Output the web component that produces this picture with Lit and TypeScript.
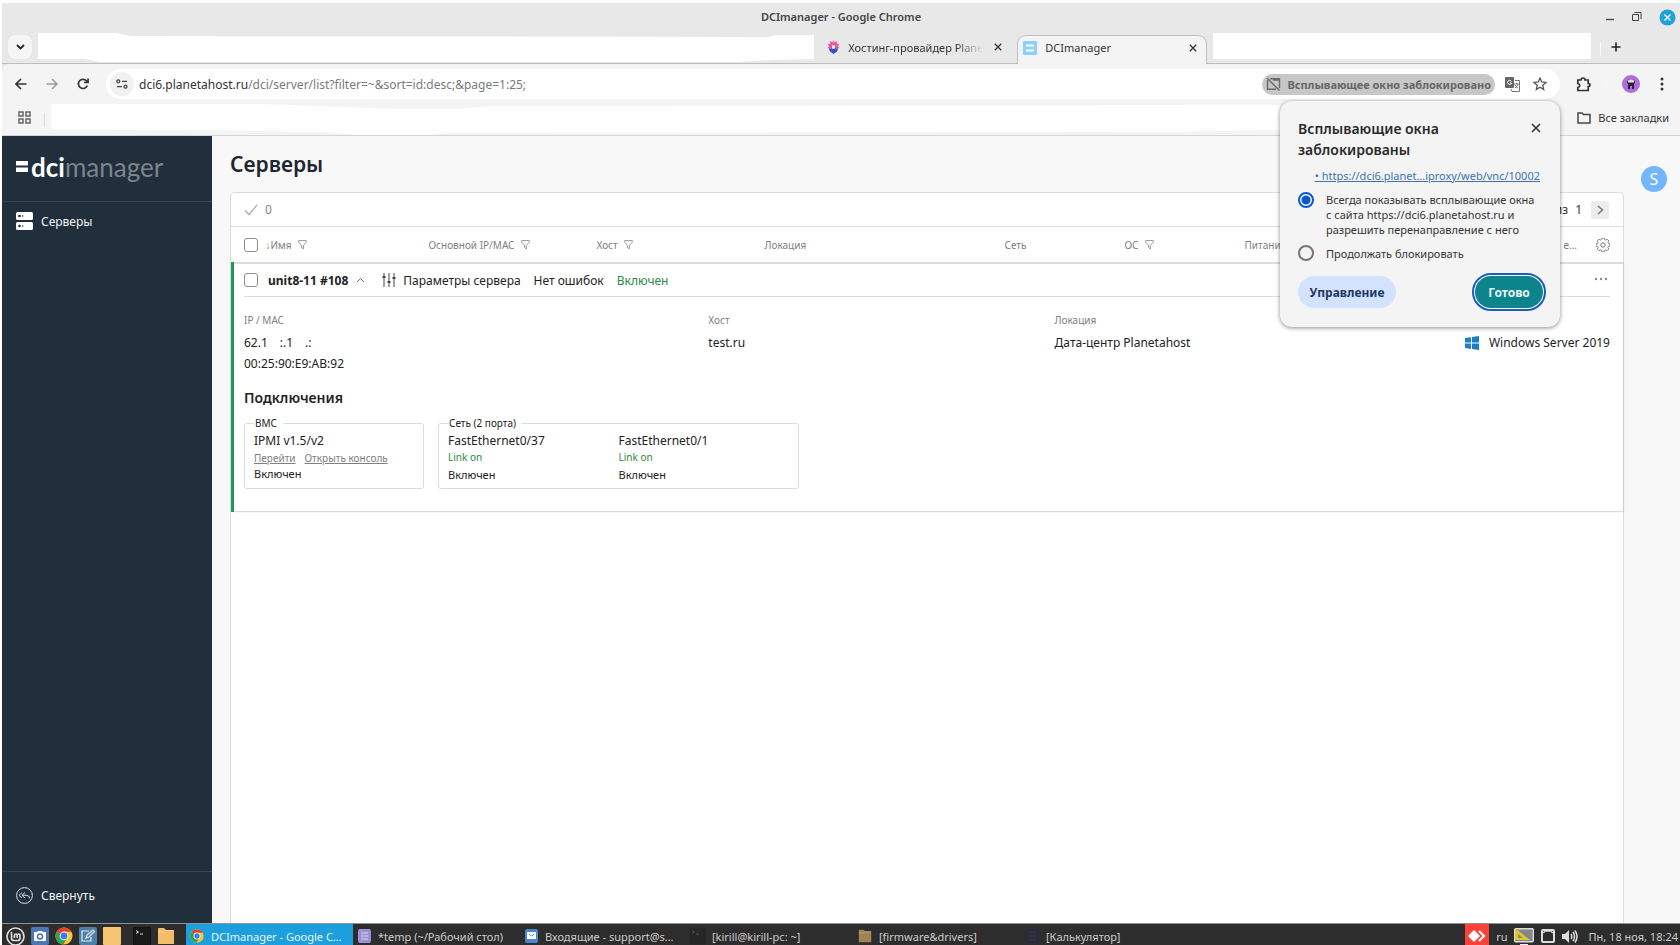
import { LitElement, html, css, svg } from "lit";
import { customElement, state } from "lit/decorators.js";

const funnel = html`<svg class="funnel" width="9" height="10" viewBox="0 0 9 10" fill="none" stroke="#999" aria-hidden="true"><path d="M.7.6h7.6v1.6L5.4 5.4v3.4l-1.8-1V5.4L.7 2.2z"/></svg>`;
const cross = (s: number) => html`<svg width=${s} height=${s} viewBox="0 0 10 10" fill="none" stroke="#333" stroke-width="1.6" aria-hidden="true"><path d="M1 1l8 8M9 1L1 9"/></svg>`;
const chromeBall = (s: number) => html`<svg width=${s} height=${s} viewBox="0 0 20 20" aria-hidden="true">
  <circle cx="10" cy="10" r="9.5" fill="#fbc52d"/><path d="M10 10L1.8 5.2A9.5 9.5 0 0 1 18.2 5.3H10z" fill="#e6402f"/>
  <path d="M10 10L1.8 5.2A9.5 9.5 0 0 0 9.2 19.5L14 12z" fill="#2ea352"/><circle cx="10" cy="10" r="4.9" fill="#fff"/><circle cx="10" cy="10" r="3.8" fill="#3b7ded"/></svg>`;
const terminal = (dim: boolean) => html`<svg width="18" height="18" viewBox="0 0 18 18" aria-hidden="true"><rect width="18" height="18" rx="2" fill=${dim ? "#262626" : "#1a1a1a"} stroke=${dim ? "#303030" : "#111"}/><path d="M3 3.5l2.5 1.5L3 6.5M7 7h3" fill="none" stroke=${dim ? "#555" : "#ddd"}/></svg>`;
const folder = (c: string, s: number) => html`<svg width=${s} height=${s} viewBox="0 0 18 18" aria-hidden="true"><path d="M1 2q0-1 1-1h5l2 2h7q1 0 1 1v13H1z" fill=${c}/><path d="M1 5h6l2-1.5h8" fill="none" stroke="#fff" stroke-opacity=".35"/></svg>`;

@customElement("browser-chrome")
class BrowserChrome extends LitElement {
  static styles = css`
    :host { display: block; color: #333; }
    button { font: inherit; color: inherit; border: 0; padding: 0; background: none; display: flex; align-items: center; justify-content: center; }
    svg { display: block; flex: none; }
    .frame { background: #e8e8e8; }
    .title { display: grid; grid-template-columns: 1fr auto 1fr; align-items: center; height: 28px; color: #444; }
    .title h1 { margin: 0; font-weight: 600; font-size: 11px; line-height: 16px; }
    .winctl { display: flex; justify-content: flex-end; align-items: center; gap: 17px; padding-right: 4px; }
    .tabs { display: flex; align-items: stretch; height: 33px; padding-top: 4px; box-sizing: border-box; border-bottom: 1px solid #bdbdbd; font-size: 11px; }
    .dropdown { width: 24px; height: 24px; border-radius: 8px; background: #f5f5f5; margin: 0 6px; }
    .blank { background: #fff; }
    .blank.left { flex: 777 1 0; margin-top: -2px; clip-path: polygon(0 0, 10% 0, 12% 3px, 94% 4px, 95% 2px, 100% 2px, 100% 26px, 95% 27px, 90% 29px, 8% 29px, 6% 26px, 0 26px); }
    .blank.right { flex: 378 1 0; margin: -2px 0 4px 6px; }
    .tab { display: flex; align-items: center; gap: 8px; box-sizing: border-box; padding-bottom: 4px; }
    .tab.idle { width: 203px; padding-left: 13px; padding-right: 15px; }
    .tab .name { flex: 1; overflow: hidden; white-space: nowrap; }
    .tab.idle .name { -webkit-mask-image: linear-gradient(90deg, #000 80%, transparent); margin-right: 3px; }
    .tab.active { width: 190px; background: #f4f4f4; border: 1px solid #bdbdbd; border-bottom: 0; border-radius: 9px 9px 0 0; margin-bottom: -1px; padding: 0 9px 5px 5px; }
    .sep { width: 1px; height: 14px; background: #f8f8f8; align-self: center; }
    .plus { width: 30px; height: 24px; margin-right: 49px; }
    .tabs .sep { margin-left: 9px; }
    .toolbar { display: flex; align-items: center; height: 40px; background: #f4f4f4; padding: 0 11px; border-top-left-radius: 8px; }
    .nav { width: 16px; height: 24px; margin-right: 15px; }
    .omnibox { flex: 1; display: flex; align-items: center; height: 30px; border-radius: 15px; background: #fff; padding: 0 12px 0 4px; font-size: 12px; }
    .site { width: 24px; height: 24px; border-radius: 12px; background: #f1f1f1; margin-right: 5px; }
    .url { flex: 1; color: #7a7a7a; white-space: nowrap; }
    .url b { font-weight: 400; color: #333; }
    .blocked { height: 21px; border-radius: 11px; background: #c7c7c7; color: #666; font-weight: 700; font-size: 11px; padding: 0 4px; gap: 6px; white-space: nowrap; margin-right: 10px; }
    .ext { display: flex; align-items: center; padding-left: 16px; gap: 15px; }
    .bookmarks { display: flex; align-items: center; height: 31px; background: #f4f4f4; border-bottom: 1px solid #d5d5d5; padding: 0 11px 0 16px; font-size: 11px; }
    .bookmarks button { height: 27px; align-self: flex-start; }
    .bookmarks .sep { background: #ddd; margin: 0 6px 0 13px; }
    .marks { flex: 1; align-self: stretch; background: #fff; clip-path: polygon(0 0, 17% 0, 24% 3px, 28% 5px, 33% 5px, 36% 2px, 100% 1px, 100% 26px, 90% 28px, 32% 29px, 31% 31px, 25% 31px, 22% 28px, 10% 26px, 0 25px); }
    .all { padding-left: 297px; gap: 7px; }
  `;
  render() {
    return html`
      <div class="frame">
        <div class="title"><span></span><h1>DCImanager - Google Chrome</h1>
          <div class="winctl">
            <button aria-label="Свернуть окно"><svg width="10" height="12" stroke="#444" stroke-width="1.3"><path d="M1 8.5h8"/></svg></button>
            <button aria-label="Восстановить"><svg width="10" height="10" fill="none" stroke="#444"><path d="M.5 2.5h6v6h-6zM2.5 .5h6.500v6.5"/></svg></button>
            <button aria-label="Закрыть"><svg width="17" height="17"><circle cx="8.5" cy="8.5" r="8" fill="#22a0dc"/><path d="M5.5 5.5l6 6M11.5 5.5l-6 6" stroke="#fff" stroke-width="1.3"/></svg></button>
          </div>
        </div>
        <div class="tabs">
          <button class="dropdown" aria-label="Поиск вкладок"><svg width="9" height="6" fill="none" stroke="#222" stroke-width="1.8"><path d="M1 1l3.5 3.5L8 1"/></svg></button>
          <div class="blank left"></div>
          <div class="tab idle">
            <svg width="13" height="14" viewBox="0 0 14 16"><path d="M7 0l1 2.500L11 1l-.5 3L13.500 4.500 12 7l2 2-2.500.5L7 13 2.500 9.500 0 9l2-2L.5 4.500 3.500 4 3 1l3 1.500z" fill="#e8589a"/><path d="M1.500 9l3 1.500L5 8.500h4l.5 2 3-1.500-1.500 4-4 3-4-3z" fill="#3a4cc0"/><path d="M5.500 6h3v4h-3z" fill="#fff"/><circle cx="7" cy="2.500" r="1" fill="#f3a35c"/></svg>
            <span class="name">Хостинг-провайдер Planeta</span>
            <button aria-label="Закрыть вкладку">${cross(8)}</button>
          </div>
          <div class="tab active">
            <svg width="14" height="14"><rect width="14" height="14" rx="1" fill="#8fd0fb"/><path d="M3 4.5h8M3 9.5h8" stroke="#fff" stroke-width="2"/></svg>
            <span class="name">DCImanager</span>
            <button aria-label="Закрыть вкладку">${cross(8)}</button>
          </div>
          <div class="blank right"></div><span class="sep"></span>
          <button class="plus" aria-label="Новая вкладка"><svg width="10" height="10" stroke="#222" stroke-width="1.6"><path d="M5 .5v9M.5 5h9"/></svg></button>
        </div>
        <div class="toolbar">
          <button class="nav" aria-label="Назад"><svg width="12" height="12" fill="none" stroke="#333" stroke-width="1.6"><path d="M11.5 6H1.5M6 1L1 6l5 5"/></svg></button>
          <button class="nav" aria-label="Вперёд"><svg width="12" height="12" fill="none" stroke="#999" stroke-width="1.5"><path d="M.5 6h10M6 1l5 5-5 5"/></svg></button>
          <button class="nav" aria-label="Обновить"><svg width="12" height="12" fill="none" stroke="#333" stroke-width="1.7"><path d="M10.3 7.5A4.600 4.600 0 1 1 9.5 2.9L11 4.400M11.1.5v4H7"/></svg></button>
          <div class="omnibox">
            <button class="site" aria-label="Сведения о сайте"><svg width="12" height="10" fill="none" stroke="#444" stroke-width="1.3"><circle cx="2.3" cy="2.3" r="1.5"/><path d="M6 2.3h5M1 7.7h5"/><circle cx="9.5" cy="7.7" r="1.5"/></svg></button>
            <span class="url"><b>dci6.planetahost.ru</b>/dci/server/list?filter=~&amp;sort=id:desc;&amp;page=1:25;</span>
            <button class="blocked"><svg width="15" height="14" fill="none" stroke="#6a6a6a" stroke-width="1.4"><path d="M4 1.7h9.5v9.5M1.5 3v9.3H10M1 1l12.5 12.5M7 3h6"/></svg>Всплывающее окно заблокировано</button>
            <button aria-label="Перевести"><svg width="15" height="15" viewBox="0 0 15 15"><rect width="9" height="11" rx="1" fill="#666"/><path d="M6.3 4.3A2 2 0 1 0 6.5 6H4.8" fill="none" stroke="#fff"/><path d="M10 3.5h4.500v11H7L6 12M9 7h5M11.5 6v1M13 7q-1 3-3 4M10 8q1 2 3 3" fill="none" stroke="#777"/></svg></button>
            <button aria-label="Добавить в закладки"><svg width="28" height="14" viewBox="-13 0 28 14" fill="none" stroke="#555" stroke-width="1.3"><path d="M7 1l1.700 4 4.300.4-3.300 2.800 1 4.300L7 10.200l-3.700 2.300 1-4.300L1 5.400 5.300 5z"/></svg></button>
          </div>
          <div class="ext">
            <button aria-label="Расширения"><svg width="15" height="15" fill="none" stroke="#333" stroke-width="1.7"><path d="M1.800 3H5q0-2 2-2t2 2h3.200v3.500q1.800 0 1.800 1.500t-1.800 1.500v4H1.800v-3q2-.4 2-2t-2-2z"/></svg></button>
            <span class="sep"></span>
            <button aria-label="Профиль"><svg width="18" height="18"><circle cx="9" cy="9" r="9" fill="#b06bdc"/><path d="M5 8q0-4 4-4t4 4l-1 1v5h-2v-3H8v3H6V9z" fill="#2b2233"/><path d="M6 5.5q3-2.500 6 0v2H6z" fill="#ddd"/></svg></button>
            <button aria-label="Меню"><svg width="14" height="14" fill="#333"><circle cx="7" cy="2" r="1.5"/><circle cx="7" cy="7" r="1.5"/><circle cx="7" cy="12" r="1.5"/></svg></button>
          </div>
        </div>
        <div class="bookmarks">
          <button aria-label="Приложения"><svg width="13" height="13" fill="none" stroke="#666" stroke-width="1.5"><path d="M1 1h4v4H1zM8 1h4v4H8zM1 8h4v4H1zM8 8h4v4H8z"/></svg></button>
          <span class="sep"></span><div class="marks"></div>
          <button class="all"><svg width="14" height="12" fill="none" stroke="#444" stroke-width="1.5"><path d="M1 1h4l1.500 1.5H13V11H1z"/></svg>Все закладки</button>
        </div>
      </div>`;
  }
}

@customElement("popup-blocked")
class PopupBlocked extends LitElement {
  @state() choice = "allow";
  static styles = css`
    :host { display: block; box-sizing: border-box; width: 280px; padding: 17px 17px 19px 18px; background: #f4f4f4; border-radius: 12px; box-shadow: 0 1px 4px rgba(0,0,0,.45); font-size: 12px; color: #333; }
    header { display: flex; justify-content: space-between; align-items: flex-start; }
    h2 { margin: 0; font-size: 14px; line-height: 21px; font-weight: 600; color: #2a2a2a; width: 170px; }
    button { font: inherit; border: 0; padding: 0; background: none; }
    .close { width: 17px; height: 20px; margin-right: -1px; }
    a { display: block; text-align: right; color: #3f72ab; line-height: 16px; font-size: 11px; margin: 8px 3px 0 0; white-space: nowrap; }
    label { display: flex; gap: 12px; line-height: 15px; margin-top: 8px; font-size: 11px; }
    label + label { align-items: center; }
    input { appearance: none; flex: none; box-sizing: border-box; width: 16px; height: 16px; margin: 0; border: 2px solid #757575; border-radius: 50%; }
    input:checked { border-color: #0b57d0; background: radial-gradient(circle, #0b57d0 4px, #fff 5px); }
    footer { display: flex; justify-content: space-between; margin-top: 15px; }
    .btn { height: 32px; border-radius: 16px; font-weight: 700; font-size: 12px; }
    .manage { width: 98px; background: #d3e3fd; color: #1c3866; }
    .done { width: 68px; background: #0c848c; color: #e8f7f7; outline: 2px solid #1f5ac0; outline-offset: 1px; box-shadow: 0 0 0 1px #fff; }
  `;
  render() {
    return html`
      <header><h2>Всплывающие окна заблокированы</h2><button class="close" aria-label="Закрыть">${cross(10)}</button></header>
      <a href="#">• https://dci6.planet…iproxy/web/vnc/10002</a>
      <label><input type="radio" name="p" .checked=${this.choice === "allow"} @change=${() => (this.choice = "allow")}><span>Всегда показывать всплывающие окна<br>с сайта https://dci6.planetahost.ru и<br>разрешить перенаправление с него</span></label>
      <label><input type="radio" name="p" .checked=${this.choice === "block"} @change=${() => (this.choice = "block")}><span>Продолжать блокировать</span></label>
      <footer><button class="btn manage">Управление</button><button class="btn done">Готово</button></footer>`;
  }
}

@customElement("dci-sidebar")
class DciSidebar extends LitElement {
  static styles = css`
    :host { display: flex; flex-direction: column; flex: none; width: 210px; background: #212e3b; color: #f2f4f5; font-size: 12px; }
    .logo { height: 66px; box-sizing: border-box; border-bottom: 1px solid #3a4652; display: flex; align-items: center; gap: 3px; padding: 0 14px 4px; font-family: Lato, "Open Sans", sans-serif; font-size: 26px; color: #7b858e; }
    .logo b { color: #fff; font-weight: 700; }
    svg { display: block; flex: none; }
    a, button { display: flex; align-items: center; gap: 8px; color: inherit; font: inherit; text-decoration: none; padding: 0 14px; background: none; border: 0; }
    a { height: 38px; }
    nav { flex: 1; }
    button { height: 52px; padding-bottom: 4px; border-top: 1px solid #3a4652; }
  `;
  render() {
    return html`
      <div class="logo"><svg width="12" height="13" fill="#fff"><path d="M0 1h12v4.5H0zM0 7.5h12V12H0z"/></svg><span><b>dci</b>manager</span></div>
      <nav><a href="#"><svg width="17" height="18"><rect width="17" height="8" rx="1.5" fill="#fff"/><rect y="10" width="17" height="8" rx="1.5" fill="#fff"/><g fill="#212e3b"><circle cx="3.5" cy="4" r="1.3"/><circle cx="3.5" cy="14" r="1.3"/><circle cx="6.8" cy="4" r=".7"/><circle cx="6.8" cy="14" r=".7"/></g></svg>Серверы</a></nav>
      <button><svg width="17" height="17" fill="none" stroke="#dfe3e6"><circle cx="8.5" cy="8.5" r="7.9"/><path d="M6 5.5l-3 2.800 3 2.700M9 5.5L6 8.300 9 11M6.3 8.3h4q3 0 3.5 3"/></svg>Свернуть</button>`;
  }
}

@customElement("server-list")
class ServerList extends LitElement {
  static styles = css`
    :host { display: flex; flex: 1; min-width: 0; background: #f8f8f8; color: #222; font-size: 12px; padding: 0 13px 0 18px; }
    main { flex: 1; min-width: 0; display: flex; flex-direction: column; }
    h1 { margin: 0; font-size: 21px; line-height: 30px; font-weight: 600; color: #1d2733; padding: 13px 0 13px; }
    button { font: inherit; color: inherit; border: 0; padding: 0; background: none; display: flex; align-items: center; justify-content: center; }
    svg { flex: none; }
    .card { flex: 1; background: #fff; border: 1px solid #dcdcdc; border-bottom: 0; border-radius: 5px 5px 0 0; }
    .bar { display: flex; align-items: center; height: 33px; padding: 0 14px 0 13px; border-bottom: 1px solid #dcdcdc; color: #888; gap: 7px; }
    .pager { margin-left: auto; display: flex; align-items: center; gap: 9px; color: #333; }
    .pager span + span { margin-left: -2px; }
    .pager button { width: 18px; height: 18px; background: #ececec; border-radius: 2px; }
    table { border-collapse: collapse; table-layout: fixed; width: 100%; }
    th { height: 35px; padding: 0; text-align: left; font-weight: 400; font-size: 10px; color: #808080; border-bottom: 2px solid #dcdcdc; white-space: nowrap; }
    .c0 { width: 33px; } .c1 { width: 163px; } .c2, .c3 { width: 168px; } .c4 { width: 240px; } .c5, .c6 { width: 120px; } .c8 { width: 120px; } .c9 { width: 46px; }
    th.end { text-align: right; }
    th.gear button { margin: 0 13px 0 auto; }
    .funnel { margin-left: 4px; vertical-align: -1px; }
    input { appearance: none; box-sizing: border-box; display: block; flex: none; width: 14px; height: 14px; margin: 0; border: 1px solid #8d8d8d; border-radius: 3px; background: #fff; }
    th input { margin-left: 11px; }
    td { padding: 0 13px 0 10px; border-left: 3px solid #1b9a59; border-bottom: 1px solid #dcdcdc; box-shadow: 1px 0 1px #ccc; }
    .head { display: flex; align-items: center; height: 32px; border-bottom: 1px solid #dcdcdc; }
    .head strong { font-weight: 700; margin: 0 8px 0 10px; }
    .params { gap: 7px; margin: 0 13px 0 17px; }
    .green { color: #2a8a46; }
    .head .green { margin-left: 13px; }
    .more { margin-left: auto; }
    dl { display: grid; grid-template-columns: 464fr 346fr 411fr 144fr; margin: 15px 0 0; line-height: 21px; }
    dl div { min-width: 0; }
    dt { font-size: 10px; line-height: 16px; color: #808080; padding-bottom: 4px; }
    dd { margin: 0; white-space: nowrap; }
    .ip { display: flex; gap: 12px; }
    .os { display: flex; justify-content: flex-end; gap: 10px; align-items: center; }
    h2 { margin: 14px 0 0; font-size: 14px; line-height: 20px; font-weight: 600; }
    .boxes { display: flex; gap: 14px; padding: 8px 0 22px; }
    fieldset { box-sizing: border-box; margin: 0; height: 73px; padding: 0 9px; border: 1px solid #dcdcdc; border-radius: 3px; min-width: 0; display: flex; font-size: 11px; }
    .bmc { width: 180px; } .net { width: 361px; }
    legend { padding: 0 6px 0 1px; font-size: 10px; line-height: 14px; }
    fieldset div { flex: 1; }
    p { margin: 0; line-height: 16px; white-space: nowrap; }
    .big { font-size: 12px; line-height: 21px; }
    .link { font-size: 10px; line-height: 15px; color: #808080; display: flex; gap: 9px; }
    .link a { color: inherit; }
    .net .link { color: #2a8a46; line-height: 12px; padding-bottom: 4px; }
    .user { width: 26px; height: 26px; border-radius: 13px; background: #74b5ff; color: #fff; font-size: 16px; margin: 30px 0 0 17px; }
  `;
  render() {
    const port = (n: string) => html`<div><p class="big">${n}</p><p class="link">Link on</p><p>Включен</p></div>`;
    return html`
      <main><h1>Серверы</h1>
      <section class="card">
        <div class="bar"><svg width="14" height="12" fill="none" stroke="#aaa" stroke-width="1.2"><path d="M1 6.5L5 10.5 13 1"/></svg>0
          <div class="pager"><span>из</span><span>1</span><button aria-label="Следующая страница"><svg width="7" height="10" fill="none" stroke="#777" stroke-width="1.5"><path d="M1 1l4.500 4L1 9"/></svg></button></div></div>
        <table>
          <thead><tr>
            <th class="c0"><input type="checkbox" aria-label="Выбрать все"></th>
            <th class="c1">↓Имя ${funnel}</th><th class="c2">Основной IP/MAC ${funnel}</th><th class="c3">Хост ${funnel}</th><th class="c4">Локация</th><th class="c5">Сеть</th><th class="c6">ОС ${funnel}</th><th>Питание</th><th class="c8 end">е…</th>
            <th class="c9 gear"><button aria-label="Настройки"><svg width="14" height="14" viewBox="-7 -7 14 14" fill="none" stroke="#777" stroke-width="1">
              <circle r="2.2"/><path d="M-1.200-6.300h2.400l.5 1.700 1.100.5 1.600-.9 1.700 1.700-.9 1.500.4 1.100 1.700.5v2.400l-1.700.5-.5 1.100.9 1.500-1.700 1.700-1.500-.9-1.100.5-.5 1.700h-2.400l-.5-1.700-1.100-.5-1.500.9-1.700-1.700.9-1.500-.5-1.100-1.700-.5V-.200l1.700-.5.5-1.100-.9-1.500 1.700-1.700 1.500.9 1.100-.5z" transform="translate(0 -1)scale(.95)"/></svg></button></th>
          </tr></thead>
          <tbody><tr><td colspan="10">
            <div class="head"><input type="checkbox" aria-label="Выбрать unit8-11"><strong>unit8-11 #108</strong>
              <svg width="9" height="6" fill="none" stroke="#777"><path d="M1 5l3.500-3.500L8 5"/></svg>
              <button class="params"><svg width="14" height="14" fill="none" stroke="#444"><path d="M2 0v14M7 0v14M12 0v14"/><path d="M.5 4h3M5.5 9h3M10.5 5h3" stroke-width="2"/></svg>Параметры сервера</button>
              <span>Нет ошибок</span><span class="green">Включен</span>
              <button class="more" aria-label="Действия"><svg width="17" height="6" fill="#888"><circle cx="3" cy="2" r="1.2"/><circle cx="8" cy="2" r="1.2"/><circle cx="13" cy="2" r="1.2"/></svg></button></div>
            <dl>
              <div><dt>IP / MAC</dt><dd class="ip"><span>62.1</span><span>:.1</span><span>.:</span></dd><dd>00:25:90:E9:AB:92</dd></div>
              <div><dt>Хост</dt><dd>test.ru</dd></div>
              <div><dt>Локация</dt><dd>Дата-центр Planetahost</dd></div>
              <div><dt>ОС</dt><dd class="os"><svg width="14" height="14" fill="#1c7fc4"><path d="M0 2l6-.8v5.400H0zM7 1l7-1v6.600H7zM0 7.5h6v5.400L0 12zM7 7.5h7V14l-7-1z"/></svg>Windows Server 2019</dd></div>
            </dl>
            <h2>Подключения</h2>
            <div class="boxes">
              <fieldset class="bmc"><legend>BMC</legend><div><p class="big">IPMI v1.5/v2</p><p class="link"><a href="#">Перейти</a><a href="#">Открыть консоль</a></p><p>Включен</p></div></fieldset>
              <fieldset class="net"><legend>Сеть (2 порта)</legend>${port("FastEthernet0/37")}${port("FastEthernet0/1")}</fieldset>
            </div>
          </td></tr></tbody>
        </table>
      </section></main>
      <button class="user" aria-label="Профиль">S</button>`;
  }
}

const tasks = [
  { name: "DCImanager - Google C…", icon: chromeBall(14) },
  { name: "*temp (~/Рабочий стол)", icon: html`<svg width="13" height="14"><rect width="13" height="14" rx="2" fill="#9d92d6"/><path d="M3 4h7M3 7h7M3 10h7" stroke="#d8d2f5"/></svg>` },
  { name: "Входящие - support@s…", icon: html`<svg width="13" height="14"><rect width="13" height="14" rx="2" fill="#4a86cf"/><path d="M2 3h9v7H2z" fill="#fff"/><path d="M4 5l2.500 2L9 5" fill="none" stroke="#5a8ac0"/></svg>` },
  { name: "[kirill@kirill-pc: ~]", icon: terminal(true) },
  { name: "[firmware&drivers]", icon: folder("#a08350", 14) },
  { name: "[Калькулятор]", icon: html`<svg width="13" height="14"><rect width="13" height="14" rx="1" fill="#2a2a38"/><path d="M3 3h7M3 7h7M3 11h7" stroke="#363648"/></svg>` },
];

@customElement("desktop-panel")
class DesktopPanel extends LitElement {
  static styles = css`
    :host { display: flex; height: 21px; overflow: hidden; background: #2d2d2d; border-top: 1px solid #8c9494; color: #ccc; font-size: 11px; }
    button { font: inherit; color: inherit; border: 0; padding: 0; background: none; display: flex; align-items: center; height: 24px; }
    svg { display: block; flex: none; }
    .launch { display: flex; gap: 6px; padding-left: 4px; width: 180px; }
    .launch .gap { margin-left: 6px; }
    .task { flex: 0 1 167px; gap: 7px; padding: 0 4px; box-sizing: border-box; white-space: nowrap; overflow: hidden; }
    .task .ic { width: 14px; display: flex; justify-content: center; }
    .task.on { background: #1e9fdd; color: #e8f5fc; }
    .tray { margin-left: auto; display: flex; align-items: center; height: 24px; gap: 7px; padding-right: 2px; white-space: nowrap; }
    .any { background: #fa4238; width: 24px; justify-content: center; }
    .clock { margin-left: 3px; }
  `;
  render() {
    return html`
      <div class="launch">
        <button aria-label="Меню"><svg width="19" height="19" fill="none" stroke="#ddd" stroke-width="1.7"><circle cx="9.5" cy="9.5" r="8.5"/><path d="M5.5 5v6q0 2.500 2.500 2.500h3.500q2.500 0 2.500-2.500V8.500q0-1.500-1.300-1.500T11.200 8.500V11M11.2 8.500Q11 7 9.800 7T8.400 8.500V11"/></svg></button>
        <button aria-label="Снимок"><svg width="18" height="18"><rect width="18" height="18" rx="2" fill="#4b78b4"/><path d="M3 5h3l1-1h4l1 1h3v9H3z" fill="#fff"/><circle cx="9" cy="9.5" r="2.5" fill="none" stroke="#4b78b4" stroke-width="1.5"/></svg></button>
        <button aria-label="Chrome">${chromeBall(18)}</button>
        <button aria-label="Заметки"><svg width="18" height="18"><rect width="18" height="18" rx="2" fill="#4d7fa8"/><path d="M10 4H3v10h9v-4M7 11l1-3 6-5 1.500 1.500L10 10z" fill="none" stroke="#e3edf5" stroke-width="1.2"/></svg></button>
        <button aria-label="Стикеры"><svg width="18" height="18"><rect width="18" height="18" rx="1" fill="#f6c471"/></svg></button>
        <button class="gap" aria-label="Терминал">${terminal(false)}</button>
        <button aria-label="Файлы">${folder("#f3bd68", 18)}</button>
      </div>
      ${tasks.map((t, i) => html`<button class="task ${i === 0 ? "on" : ""}"><span class="ic">${t.icon}</span>${t.name}</button>`)}
      <div class="tray">
        <button class="any" aria-label="AnyDesk"><svg width="18" height="12"><path d="M6 0l6 6-6 6-6-6z" fill="#fff"/><path d="M11 1l5 5-5 5" fill="none" stroke="#fff" stroke-width="2.2"/></svg></button>
        <span>ru</span>
        <svg width="20" height="19"><rect x=".7" y="1.7" width="18.6" height="13" rx="1" fill="#80888a" stroke="#ddd" stroke-width="1.4"/><path d="M1 1l15 12H1z" fill="#e0c62f"/><path d="M4 7l5 4H4z" fill="#80888a"/><path d="M6 17h8v2H6z" fill="#eee"/></svg>
        <svg width="14" height="15" fill="none" stroke="#ddd" stroke-width="2"><rect x="1" y="1" width="12" height="12" rx="1"/><path d="M1 4q2 0 3-2h6q1 2 3 2" stroke-width="1.5"/></svg>
        <svg width="16" height="15" fill="none" stroke="#ddd" stroke-width="1.5"><path d="M0 5h3l4-4v13l-4-4H0z" fill="#ddd" stroke="none"/><path d="M9 5q1.500 2.500 0 5M11 3q3 4.500 0 9M13 1.500q4 6 0 12"/></svg>
        <span class="clock">Пн, 18 ноя, 18:24</span>
      </div>`;
  }
}

@customElement("app-root")
class AppRoot extends LitElement {
  static styles = css`
    :host { display: flex; flex-direction: column; box-sizing: border-box; height: 100vh; padding: 3px 0 0 2px; position: relative; overflow: hidden; background: #fff; font-family: "Noto Sans", "Open Sans", sans-serif; }
    .page { flex: 1; min-height: 0; display: flex; }
    popup-blocked { position: absolute; top: 101px; right: 120px; }
  `;
  render() {
    return html`<browser-chrome></browser-chrome>
      <div class="page"><dci-sidebar></dci-sidebar><server-list></server-list></div>
      <desktop-panel></desktop-panel><popup-blocked></popup-blocked>`;
  }
}
